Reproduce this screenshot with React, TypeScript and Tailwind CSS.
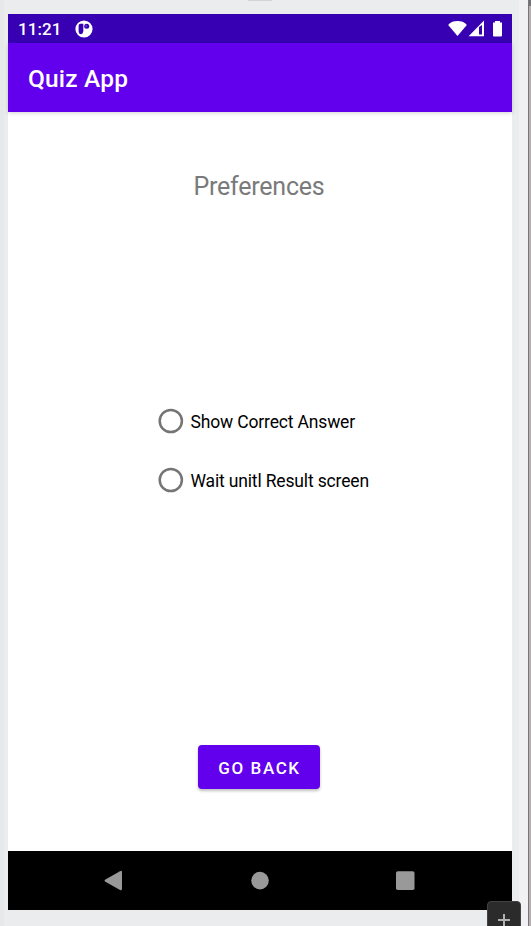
function StatusBar() {
  return (
    <div className="flex h-[29px] items-center bg-[#3700b3] pl-[10px] text-white">
      <span className="w-[57px] pt-[2px] text-[17px] font-medium leading-[29px] tracking-[0.1px] whitespace-nowrap">11:21</span>
      <svg className="h-[18px] w-[18px]" viewBox="0 0 18 18">
        <circle cx="9" cy="9" r="8.6" fill="white" />
        <path d="M5.8 3.8H8.3V11.6Q8 14.2 5.8 14.2C3.6 14 3.6 11.8 3.6 8.5C3.6 5 3.6 3.8 5.8 3.8Z" fill="#3700b3" />
        <circle cx="11.7" cy="6.2" r="2.5" fill="#3700b3" />
        <circle cx="11.2" cy="6" r="0.9" fill="#6d49c9" />
      </svg>
      <svg className="ml-auto h-[29px] w-[64px]" viewBox="448 14 64 29">
        <path d="M448.6 24.3C450.5 22 453.8 20.9 457.5 20.9S464.5 22 466.4 24.3V25.6L457.5 36.1L448.6 25.6Z" fill="white" />
        <path d="M484 20.5V36.2H468.6Z" fill="white" />
        <path d="M479 27L482 25V34.6H479Z" fill="#3700b3" />
        <path d="M495 21H500V22.4H502V35.6Q502 36.6 501 36.6H494Q493 36.6 493 35.6V22.4H495Z" fill="white" />
      </svg>
    </div>
  );
}

function RadioOption({ label }: { label: string }) {
  return (
    <label className="flex h-[26px] items-center">
      <svg className="h-[26px] w-[26px] shrink-0" viewBox="0 0 26 26">
        <circle cx="12.8" cy="13" r="11.1" fill="none" stroke="#757575" strokeWidth="2.5" />
      </svg>
      <span className="ml-[6.5px] pt-[2px] text-[17.5px] leading-[26px] tracking-[-0.16px] whitespace-nowrap text-black">{label}</span>
    </label>
  );
}

function NavigationBar() {
  return (
    <nav className="h-[59px] bg-black">
      <svg className="block h-[59px] w-[504px]" viewBox="8 851 504 59" fill="#999999">
        <path d="M105 879.7L120 871.2Q122 870.2 122 872.2V888.8Q122 891 120 889.9L105 881.5Q104 880.6 105 879.7Z" />
        <circle cx="260" cy="880.6" r="8.8" />
        <rect x="396" y="871.2" width="18.5" height="18.8" rx="1.8" />
      </svg>
    </nav>
  );
}

export default function App() {
  return (
    <div className="relative flex h-[926px] w-[531px] overflow-hidden bg-[#ebecee] font-[Roboto,sans-serif]">
      <div className="w-[4px] shrink-0 bg-[#e7e8ea]" />
      <div className="ml-[4px] mt-[14px] h-[896px] w-[504px] shrink-0">
        <StatusBar />
        <header className="relative h-[69px] bg-[#6200ee] pl-[20px] shadow-[0_1px_4px_rgba(0,0,0,0.18)]">
          <h1 className="text-[24.5px] font-medium leading-[71px] tracking-[0.18px] text-white">Quiz App</h1>
        </header>
        <main className="flex h-[739px] flex-col items-center bg-white">
          <h2 className="mt-[58px] h-[32px] -translate-x-px text-[25px] leading-[33px] tracking-[-0.22px] whitespace-nowrap text-[#7a7a7a]">Preferences</h2>
          <div className="mt-[206px] flex w-[218px] translate-x-[7px] flex-col gap-[33px]">
            <RadioOption label="Show Correct Answer" />
            <RadioOption label="Wait unitl Result screen" />
          </div>
          <button className="mr-[2px] mt-[252px] h-[44px] w-[122px] rounded-[4px] bg-[#6200ee] pl-[1px] text-center text-[17px] font-medium leading-[46px] tracking-[1.6px] text-white shadow-[0_2px_3px_rgba(0,0,0,0.25)]">GO BACK</button>
        </main>
        <NavigationBar />
      </div>
      <div className="ml-auto flex h-full w-[12px]">
        <div className="w-[9px] bg-[#f1f1f3]" />
        <div className="w-[1px] bg-[#77767a]" />
        <div className="w-[2px] bg-[#b5afb2]">
          <div className="h-[6px] bg-[#747176]" />
        </div>
      </div>
      <div className="absolute left-[248px] top-0 h-px w-[24px] bg-[#d5d5d7]" />
      <div className="absolute left-[487px] top-[901px] h-[30px] w-[34px] rounded-[4px] border border-[#424242] bg-[#2b2b2b]">
        <svg className="h-[28px] w-[32px]" viewBox="0 0 32 28">
          <path d="M10 18H22M16 12V24" stroke="#afb1b3" strokeWidth="2" />
        </svg>
      </div>
    </div>
  );
}
